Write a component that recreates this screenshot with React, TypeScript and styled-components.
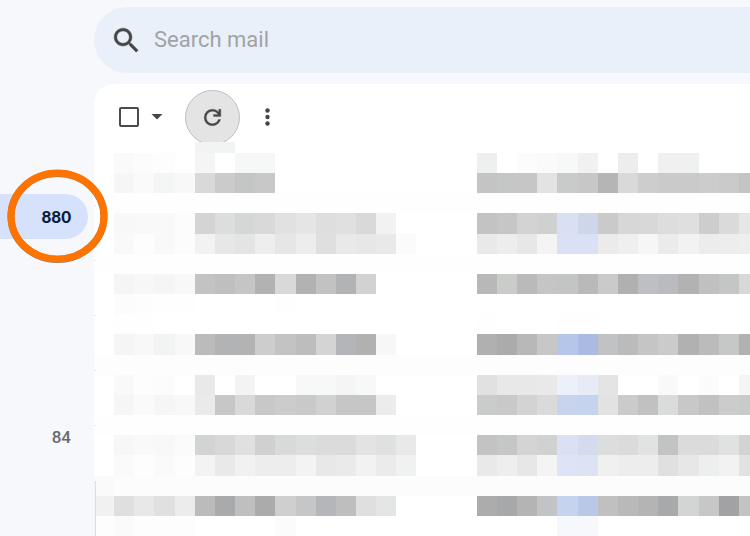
import React from 'react';
import styled, { createGlobalStyle } from 'styled-components';

const GlobalStyle = createGlobalStyle`
  *, *::before, *::after { box-sizing: border-box; }
  body { margin: 0; background: #f6f8fc; font-family: Roboto, "Liberation Sans", sans-serif; }
  button, input { font: inherit; }
`;

const Page = styled.div`
  display: flex;
  height: 100vh;
  overflow: hidden;
  background: #f6f8fc;
`;

const Sidebar = styled.nav`
  flex: 0 0 94px;
  display: flex;
  flex-direction: column;
  gap: 175px;
  padding: 194px 6px 0 0;
`;

const FolderLink = styled.a<{ $active?: boolean }>`
  position: relative;
  display: flex;
  align-items: center;
  justify-content: flex-end;
  height: 45px;
  padding-right: 17px;
  border-radius: 0 23px 23px 0;
  background: ${(p) => (p.$active ? '#d6e1fb' : 'transparent')};
  color: ${(p) => (p.$active ? '#0b1f3a' : '#66696d')};
  font-family: ${(p) => (p.$active ? 'Lato, Roboto, sans-serif' : 'Roboto, sans-serif')};
  font-size: 17px;
  font-weight: ${(p) => (p.$active ? 900 : 500)};
  line-height: 20px;
  text-decoration: none;
`;

const Highlight = styled.svg`
  position: absolute;
  z-index: 2;
  left: 6px;
  top: -26px;
  width: 103px;
  height: 96px;
  pointer-events: none;
`;

const Main = styled.main`
  flex: 1;
  min-width: 0;
  display: flex;
  flex-direction: column;
  gap: 11px;
  padding-top: 7px;
`;

const SearchBar = styled.form`
  flex: none;
  display: flex;
  align-items: center;
  gap: 11px;
  height: 66px;
  padding-left: 16px;
  border-radius: 33px 0 0 33px;
  background: #e9f0fa;
`;

const IconButton = styled.button`
  display: flex;
  align-items: center;
  justify-content: center;
  padding: 0;
  border: 0;
  background: none;
  color: #444746;
`;

const SearchInput = styled.input`
  flex: 1;
  min-width: 0;
  padding: 0;
  border: 0;
  outline: 0;
  background: none;
  color: #444746;
  font-size: 22px;
  line-height: 32px;
  &::placeholder { color: #a0a3a6; opacity: 1; }
`;

const Panel = styled.section`
  position: relative;
  flex: 1;
  min-height: 0;
  overflow: hidden;
  border-radius: 20px 0 0 0;
  background: #fff;
`;

const Toolbar = styled.div`
  display: flex;
  align-items: center;
  height: 58px;
  padding: 8px 0 0 25px;
`;

const SelectAll = styled.input`
  appearance: none;
  width: 20px;
  height: 20px;
  margin: 0 12px 0 0;
  border: 2px solid #4a4c4b;
  border-radius: 2px;
`;

const RefreshButton = styled(IconButton)`
  width: 55px;
  height: 55px;
  margin: 0 20px 0 22px;
  border: 1px solid #bdbec3;
  border-radius: 50%;
  background: #e4e4e4;
`;

const Mosaic = styled.div`
  position: relative;
  width: 665px;
`;

const Strip = styled.div`
  display: grid;
  grid-template-columns: repeat(33, 1fr);
  height: 11px;
`;

const Grid = styled.div`
  display: grid;
  grid-template-columns: repeat(33, 1fr);
  grid-template-rows: repeat(19, 1fr);
  height: 383px;
`;

const Cell = styled.div``;

const Dividers = styled.div`
  position: absolute;
  left: 0;
  top: 121px;
  width: 2px;
  height: 222px;
  background: repeating-linear-gradient(#e9eaec 0 1px, transparent 1px 55px);
`;

const RowEdge = styled.div`
  position: absolute;
  left: 0;
  top: 397px;
  bottom: 0;
  width: 2px;
  background: linear-gradient(90deg, #f1f3f7 50%, #dcdfe6 50%);
`;

// Each row: margin and controls (5 cells) | sender (14 cells) | subject (14 cells).
// Two digits are a grey level, six digits a full colour, a dot an empty cell.
const rows = [
  '. fa fc fd . | f5 . f6f8f8 f6f8f8 | edf0ef . fc fa f7f9f8 f1 . ed . f0 eff1f0 . . .',
  '. f6 fa f4f6f5 f8 | d9 cb c3c6c4 c8 | c4 c4c7c5 c6 e3 c9cbca c7 b5 d9 cd ca ca cc ca c4',
  'fe fe fe fe fe | fe fe fe fe fe fe fe fe fe fe fe fe fe fe | fe fe fe fe fe fe fe fe fe fe fe fe fe fe',
  '. f8 f9 f8f9f8 fc | d4 dcdedd d5d7d6 d9 e1 e5 de e0 d9 f1f3f2 | c3 c4c7c5 d3 cfd1d0 d9e0f4 cdd7e9 ca d7 d8 dd df cd da e6',
  '. f9 fd f9 fc | f2 e7 e4 ee e6 ed df e9 e7 e9 fb | e9 ed e7 f4 dae1f5 dae1f5 eb ef f6 eb f2 ec ed ee',
  'fe fe fe fe fe | fe fe fe fe fe fe fe fe fe fe fe fe fe fe | fe fe fe fe fe fe fe fe fe fe fe fe fe fe',
  '. f5 f7 f5 f8 | c3 bf c5 b2 d9 b2 c2 b1b3b5 d2 | b8 caccca ba c5 c2c5c3 b9 ca b0 bdbfc2 b9bbbe b2 c0 c3c6c4 d8',
  '. fc fd fe fe | . . . . fe . | .',
  '. fe fe . . | . | fe . . . fe fe',
  '. f5 f8 f2f4f3 f8 | bb b1b3b5 b3 cd c3 bd d4 b3b5b8 b1 f7 | b0 ab b8 c7 b6c6eb abbae2 c0c2c4 bb c5 cb b1 bb c5c8c6 b1',
  'fd fd fd fd fd | fd fd fd fd fd fd fd fd fd fd fd fd fd fd | fd fd fd fd fd fd fd fd fd fd fd fd fd fd',
  '. f9 fd fc . | e9 . f3 . . f7f9f8 f7f9f8 f5 f7f9f8 | e1 e8 e8 e9 ebf0fa e6ebf6 e4 . . f9 . fb . f5',
  '. f6 fa f6 f8 | ea c7 d9 c8 cc c9 d1 c6 c6 ec | c9ccca c9 d3 da c8d3ee c6d3ef e2 cb c1 d9dcda c8 c1 cc c8cbc9',
  'fe fe fe fe fe | fe fe fe fe fe fe fe fe fe fe fe fe fe fe | fe fe fe fe fe fe fe fe fe fe fe fe fe fe',
  '. f7 f9 f8 fb | d1d4d2 d8 e0 d0 d8dad9 dcdedd db db e3 dfe1e0 e9 | c3 c4c7c5 d4 d0d2d1 dae1f4 d5dbee dcdedd db e1e3e2 c1c4c2 db db e0e2e1 d3',
  '. fa fd fa fd | f3 e9 f1 ed ed f3 e8 ea f2 eb f0f2f1 | e9 ee e7 f4 dde4f6 dce3f3 f0 ed ed e0 e7 edefee f2 e2',
  'fa fc fc fc fc | fc fc fc fc fc fc fc fc fc fc fc fc fc fc | fc fc fc fc fc fc fc fc fc fc fc fc fc fc',
  'f1 df e8 e0 ec | bb a9aaac bf ab cf c4c6c8 b4b6b9 be df e4e6e5 | ac a6a8aa b4 c1c3c5 c5d3ef bac8e8 c0 b9 b4 a8a9ab d2d5d3 c7 a2a2a4 c3',
  'fd fa fd fd fd | . . . . fb | . . . . f6f8fc f6f8fc',
];

const groupSizes = [5, 14, 14];

const toColour = (token: string | undefined) => {
  if (!token || token === '.') return 'transparent';
  return token.length === 2 ? `#${token.repeat(3)}` : `#${token}`;
};

const parseRow = (row: string) =>
  row.split('|').flatMap((group, i) => {
    const tokens = group.trim().split(' ');
    return Array.from({ length: groupSizes[i] }, (_, n) => toColour(tokens[n]));
  });

const Tiles = ({ data }: { data: string[] }) => (
  <>
    {data.flatMap(parseRow).map((colour, i) => (
      <Cell key={i} style={{ background: colour }} />
    ))}
  </>
);

export default function App() {
  return (
    <>
      <GlobalStyle />
      <Page>
        <Sidebar aria-label="Folders">
          <FolderLink href="#inbox" $active>
            880
            <Highlight viewBox="0 0 103 96" aria-hidden="true">
              <ellipse cx="51.5" cy="48.5" rx="46.5" ry="43" fill="none" stroke="#8a8078" strokeWidth="7" />
              <ellipse cx="51.5" cy="48" rx="46.5" ry="43" fill="none" stroke="#ff7400" strokeWidth="7" />
            </Highlight>
          </FolderLink>
          <FolderLink href="#drafts">84</FolderLink>
        </Sidebar>
        <Main>
          <SearchBar role="search">
            <IconButton type="button" aria-label="Search">
              <svg width="33" height="33" viewBox="0 0 24 24" fill="currentColor" stroke="currentColor" strokeWidth="0.3">
                <path d="M15.5 14h-.79l-.28-.27C15.41 12.59 16 11.11 16 9.5 16 5.91 13.09 3 9.5 3S3 5.91 3 9.5 5.91 16 9.5 16c1.61 0 3.09-.59 4.23-1.57l.27.28v.79l5 4.99L20.49 19l-4.99-5zm-6 0C7.01 14 5 11.99 5 9.5S7.01 5 9.5 5 14 7.01 14 9.5 11.99 14 9.5 14z" />
              </svg>
            </IconButton>
            <SearchInput type="text" placeholder="Search mail" aria-label="Search mail" />
          </SearchBar>
          <Panel>
            <Toolbar>
              <SelectAll type="checkbox" aria-label="Select all" />
              <IconButton type="button" aria-label="Select options">
                <svg width="12" height="6" viewBox="0 0 12 6" fill="currentColor">
                  <path d="M.5 0h11L6 5.5z" />
                </svg>
              </IconButton>
              <RefreshButton type="button" aria-label="Refresh">
                <svg width="25" height="25" viewBox="0 0 24 24" fill="currentColor" stroke="currentColor" strokeWidth="0.3">
                  <path d="M12 20q-3.35 0-5.675-2.325T4 12t2.325-5.675T12 4q1.725 0 3.3.713T18 6.75V4h2v7h-7V9h4.2q-.8-1.4-2.187-2.2T12 6Q9.5 6 7.75 7.75T6 12t1.75 4.25T12 18q1.925 0 3.475-1.1T17.65 14h2.1q-.7 2.65-2.85 4.325T12 20" />
                </svg>
              </RefreshButton>
              <IconButton type="button" aria-label="More">
                <svg width="14" height="20" viewBox="0 0 14 20" fill="currentColor">
                  <circle cx="7.5" cy="3.5" r="2.2" />
                  <circle cx="7.5" cy="10" r="2.2" />
                  <circle cx="7.5" cy="16.5" r="2.2" />
                </svg>
              </IconButton>
            </Toolbar>
            <Mosaic aria-hidden="true">
              <Strip>
                <Tiles data={['. . . . . | f2f3f3 f2f3f3 | .']} />
              </Strip>
              <Grid>
                <Tiles data={rows} />
              </Grid>
            </Mosaic>
            <Dividers />
            <RowEdge />
          </Panel>
        </Main>
      </Page>
    </>
  );
}
